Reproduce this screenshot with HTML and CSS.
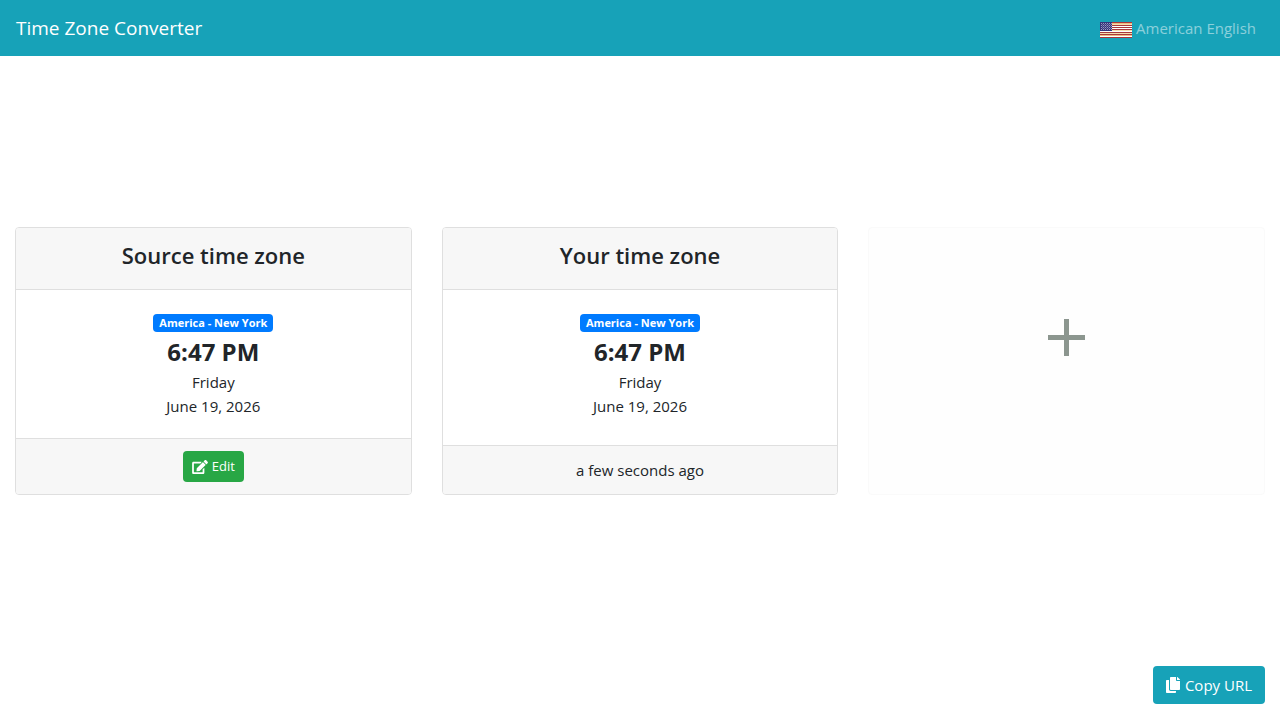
FILE: index.html
```html
<!DOCTYPE html>
<html lang="en">
<head>
    <meta charset="UTF-8">
    <meta name="viewport" content="width=device-width, initial-scale=1.0">
    <title>Time Zone Converter</title>
    <link rel="stylesheet" href="styles.css">
</head>
<body>
    <nav class="navbar">
        <a class="navbar-brand" href="#">Time Zone Converter</a>
        <a class="nav-link" href="#">
            <svg class="flag" width="32" height="16" viewBox="0 0 32 16" shape-rendering="crispEdges" aria-hidden="true">
                <rect width="32" height="16" fill="#fff"/>
                <path d="M0 2.5h32M0 8.5h32M0 11.5h32" stroke="#f3dfae"/>
                <path d="M0 .5h32M0 3.5h32M0 5.5h32M0 7.5h32M0 10.5h32M0 12.5h32M0 15.5h32" stroke="#a8383b"/>
                <path d="M0 1.5h32M0 13.5h32" stroke="#efb880"/>
                <rect width="12" height="9" fill="#35357c"/>
                <path d="M1 1.5h11M1 3.5h11M1 5.5h11M1 7.5h11" stroke="#9a99bd" stroke-dasharray="1 1"/>
                <path d="M2 2.5h10M2 4.5h10M2 6.5h10" stroke="#6e6ea5" stroke-dasharray="1 1"/>
            </svg>
            <span>American English</span>
        </a>
    </nav>

    <main class="zones">
        <section class="card">
            <div class="card-header"><h4>Source time zone</h4></div>
            <div class="card-body">
                <div class="zone-name"><span class="badge">America - New York</span></div>
                <div class="time">6:47 PM</div>
                <div>Friday</div>
                <div>June 19, 2026</div>
            </div>
            <div class="card-footer">
                <button type="button" class="btn btn-edit">
                    <svg width="16" height="14" viewBox="0 0 576 512" fill="currentColor" aria-hidden="true"><path d="M402.600 83.200l90.200 90.200c3.800 3.800 3.800 10 0 13.800L274.400 405.600l-92.800 10.300c-12.400 1.400-22.900-9.100-21.500-21.500l10.300-92.800L388.800 83.200c3.800-3.800 10-3.800 13.800 0zm162-22.900l-48.800-48.800c-15.200-15.200-39.900-15.200-55.200 0l-35.400 35.400c-3.800 3.800-3.800 10 0 13.800l90.200 90.200c3.800 3.800 10 3.800 13.800 0l35.400-35.400c15.200-15.300 15.200-40 0-55.200zM384 346.200V448H64V128h229.800c3.200 0 6.200-1.300 8.500-3.500l40-40c7.600-7.600 2.200-20.500-8.500-20.500H48C21.500 64 0 85.500 0 112v352c0 26.500 21.500 48 48 48h352c26.500 0 48-21.500 48-48V306.200c0-10.700-12.900-16-20.500-8.500l-40 40c-2.200 2.300-3.500 5.300-3.500 8.500z"/></svg>
                    Edit
                </button>
            </div>
        </section>

        <section class="card">
            <div class="card-header"><h4>Your time zone</h4></div>
            <div class="card-body">
                <div class="zone-name"><span class="badge">America - New York</span></div>
                <div class="time">6:47 PM</div>
                <div>Friday</div>
                <div>June 19, 2026</div>
            </div>
            <div class="card-footer">a few seconds ago</div>
        </section>

        <button type="button" class="card card-add" aria-label="Add time zone">
            <svg width="37" height="37" viewBox="0 0 37 37" aria-hidden="true"><path d="M18.500 0v37M0 18.500h37" stroke="currentColor" stroke-width="5"/></svg>
        </button>
    </main>

    <footer class="actions">
        <button type="button" class="btn btn-copy">
            <svg width="14" height="16" viewBox="0 0 448 512" fill="currentColor" aria-hidden="true"><path d="M320 448v40c0 13.255-10.745 24-24 24H24c-13.255 0-24-10.745-24-24V120c0-13.255 10.745-24 24-24h72v296c0 30.879 25.121 56 56 56h168zm0-344V0H152c-13.255 0-24 10.745-24 24v368c0 13.255 10.745 24 24 24h272c13.255 0 24-10.745 24-24V128H344c-13.200 0-24-10.800-24-24zm120.971-31.029L375.029 7.029A24 24 0 0 0 358.059 0H352v96h96v-6.059a24 24 0 0 0-7.029-16.970z"/></svg>
            Copy URL
        </button>
    </footer>
</body>
</html>
```
FILE: styles.css
```css
* {
    box-sizing: border-box;
}
body {
    margin: 0;
    min-height: 100vh;
    display: flex;
    flex-direction: column;
    font-family: "Segoe UI", "Open Sans", "Noto Sans", sans-serif;
    font-size: 15px;
    line-height: 24px;
    color: #212529;
    background-color: #fff;
}
.navbar {
    display: flex;
    align-items: center;
    justify-content: space-between;
    min-height: 56px;
    padding: 8px 24px 8px 16px;
    background-color: #17a2b8;
}
.navbar a {
    text-decoration: none;
}
.navbar-brand {
    font-size: 19px;
    line-height: 30px;
    color: #fff;
}
.nav-link {
    display: flex;
    align-items: center;
    gap: 4px;
    color: rgba(255, 255, 255, 0.5);
}
.flag {
    margin-top: 4px;
}
.zones {
    flex: 1;
    display: grid;
    grid-template-columns: repeat(3, 1fr);
    align-content: center;
    gap: 30px;
    padding: 0 15px;
}
.card {
    display: flex;
    flex-direction: column;
    border: 1px solid #dfdfdf;
    border-radius: 4px;
    background-color: #fff;
    text-align: center;
    overflow: hidden;
}
.card-header {
    padding: 12px 20px;
    border-bottom: 1px solid #dfdfdf;
    background-color: #f7f7f7;
}
.card-header h4 {
    margin: 0 0 6px;
    font-size: 22px;
    font-weight: 600;
    line-height: 31px;
}
.card-body {
    flex: 1;
    padding: 20px;
}
.zone-name {
    display: flex;
    justify-content: center;
    padding: 4px 0 2px;
}
.badge {
    padding: 3px 6px;
    border-radius: 4px;
    font-size: 11px;
    font-weight: 700;
    line-height: 12px;
    color: #fff;
    background-color: #007bff;
}
.time {
    font-size: 24px;
    font-weight: 700;
    line-height: 36px;
}
.card-footer {
    padding: 12px 20px;
    border-top: 1px solid #dfdfdf;
    background-color: #f7f7f7;
}
.card-add {
    align-items: center;
    justify-content: center;
    padding: 0 0 48px;
    border-color: #fafafa;
    color: #8c968f;
    background-color: #fefefe;
    cursor: pointer;
}
.btn {
    display: inline-flex;
    align-items: center;
    border: 1px solid transparent;
    border-radius: 4px;
    font-family: inherit;
    color: #fff;
    cursor: pointer;
}
.btn-edit {
    gap: 4px;
    padding: 4px 8px;
    font-size: 13px;
    line-height: 21px;
    vertical-align: top;
    background-color: #28a745;
}
.btn-copy {
    gap: 5px;
    padding: 6px 12px;
    font-size: 15px;
    line-height: 24px;
    background-color: #17a2b8;
}
.actions {
    display: flex;
    justify-content: flex-end;
    padding: 0 15px 16px;
}
```
